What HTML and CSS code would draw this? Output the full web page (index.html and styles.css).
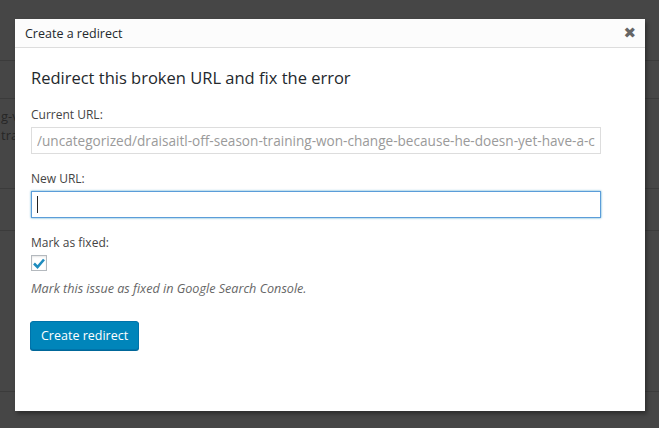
FILE: index.html
```html
<!DOCTYPE html>
<html lang="en">

<head>
    <meta charset="UTF-8">
    <title>Create a redirect</title>
    <link rel="stylesheet" href="styles.css">
</head>

<body>
    <!-- page behind the overlay -->
    <div class="page">
        <div class="row row-top"></div>
        <div class="row row-a"></div>
        <div class="row row-b">
            <div class="ghost">g-v<br>tra</div>
        </div>
        <div class="row row-c"></div>
        <div class="row row-d"></div>
    </div>

    <div class="modal">
        <div class="modal-head">
            <span class="modal-title">Create a redirect</span>
            <span class="close">&#10006;</span>
        </div>
        <div class="modal-body">
            <h2>Redirect this broken URL and fix the error</h2>

            <label class="lbl">Current URL:</label>
            <input class="field field-ro" type="text" readonly
                value="/uncategorized/draisaitl-off-season-training-won-change-because-he-doesn-yet-have-a-contract/">

            <label class="lbl">New URL:</label>
            <div class="field field-focus"><span class="caret"></span></div>

            <label class="lbl">Mark as fixed:</label>
            <div class="check">
                <svg width="12" height="11" viewBox="0 0 12 11">
                    <path d="M1 5.5 L4.5 9 L11 1.5" fill="none" stroke="#1e8cbe" stroke-width="2.6" />
                </svg>
            </div>
            <p class="desc">Mark this issue as fixed in Google Search Console.</p>

            <button class="btn">Create redirect</button>
        </div>
    </div>
</body>

</html>
```

FILE: styles.css
```css
body {
    margin: 0;
    background: #464646;
    font-family: "Open Sans", "Noto Sans", sans-serif;
    overflow: hidden;
}

.page {
    height: 428px;
}

.row {
    border-bottom: 1px solid #3b3b3b;
}

.row-top {
    height: 60px;
}

.row-a {
    height: 37px;
}

.row-b {
    height: 90px;
    padding-top: 8px;
    box-sizing: border-box;
}

.row-c {
    height: 41px;
}

.row-d {
    height: 160px;
}

.ghost {
    padding-left: 1px;
    font-size: 13px;
    line-height: 19px;
    color: #262626;
}

.modal {
    position: absolute;
    left: 15px;
    top: 19px;
    width: 630px;
    height: 392px;
    background: #fff;
    box-shadow: 2px 3px 4px rgba(0, 0, 0, 0.35);
}

.modal-head {
    height: 28px;
    background: #fcfcfc;
    border-bottom: 1px solid #dddddd;
    display: flex;
    align-items: center;
    justify-content: space-between;
    padding: 0 9px 0 10px;
}

.modal-title {
    font-size: 12.5px;
    color: #23282d;
}

.close {
    font-size: 15px;
    color: #666;
    font-family: "DejaVu Sans", sans-serif;
    font-weight: bold;
}

.modal-body {
    padding: 18px 44px 0 16px;
}

h2 {
    margin: 0 0 16px;
    font-size: 16.5px;
    font-weight: 400;
    color: #23282d;
    line-height: 24px;
}

.lbl {
    display: block;
    font-size: 12px;
    color: #444;
    line-height: 18px;
    margin-bottom: 3px;
}

.field {
    display: block;
    width: 100%;
    height: 27px;
    box-sizing: border-box;
    margin: 0 0 16px;
    border: 1px solid #dddddd;
    padding: 0 5px;
    font-family: "Open Sans", "Noto Sans", sans-serif;
    font-size: 13.6px;
    outline: none;
}

.field-ro {
    color: #9a9a9a;
    background: #fff;
}

.field-focus {
    border-color: #5b9dd9;
    box-shadow: 0 0 2px rgba(30, 140, 190, 0.8);
    display: flex;
    align-items: center;
}

.caret {
    width: 1px;
    height: 17px;
    background: #222;
}

.check {
    width: 16px;
    height: 16px;
    box-sizing: border-box;
    border: 1px solid #b4b9be;
    display: flex;
    align-items: center;
    justify-content: center;
    box-shadow: inset 0 1px 2px rgba(0, 0, 0, 0.1);
}

.desc {
    margin: 9px 0 23px;
    font-size: 12.6px;
    line-height: 18px;
    font-style: italic;
    color: #666;
}

.btn {
    display: block;
    height: 29px;
    padding: 0 10px;
    background: #0085ba;
    border: 1px solid #0073aa;
    border-radius: 3px;
    box-shadow: 0 1px 0 #006799;
    color: #fff;
    font-family: "Open Sans", "Noto Sans", sans-serif;
    font-size: 12.5px;
    margin-left: -1px;
}
```
